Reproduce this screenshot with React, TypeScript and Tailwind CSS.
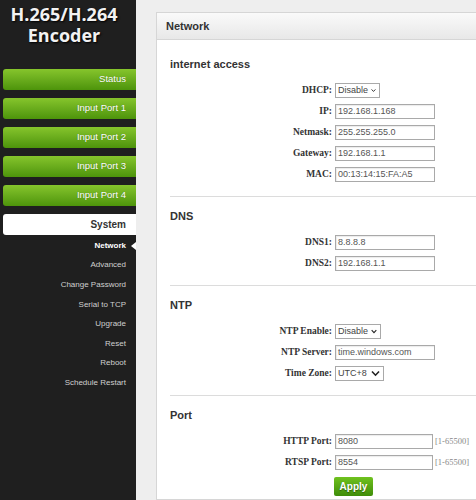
import React from "react";

const sans = { fontFamily: '"Liberation Sans", Arial, sans-serif' };

const navButtons = ["Status", "Input Port 1", "Input Port 2", "Input Port 3", "Input Port 4"];
const subItems = ["Advanced", "Change Password", "Serial to TCP", "Upgrade", "Reset", "Reboot", "Schedule Restart"];

const Chevron = () => (
  <svg width="9" height="7" viewBox="0 0 9 7" className="ml-[3px]">
    <path d="M1 1.5 L4.5 5.2 L8 1.5" fill="none" stroke="#222" strokeWidth="1.6" />
  </svg>
);

const Input = ({ value, w = "w-[100px]" }: { value: string; w?: string }) => (
  <div
    className={`${w} flex h-[15px] items-center border border-[#a9a9a9] bg-white pl-[2px] text-[9px] text-[#555] shadow-[inset_1px_1px_1px_rgba(0,0,0,0.08)]`}
  >
    {value}
  </div>
);

const Select = ({ value, w }: { value: string; w: string }) => (
  <div
    className={`${w} flex h-[15px] items-center justify-between border border-[#a9a9a9] bg-white pl-[2px] pr-[3px] text-[9px] text-[#444]`}
  >
    <span>{value}</span>
    <Chevron />
  </div>
);

const Row = ({ label, children }: { label: string; children: React.ReactNode }) => (
  <div className="flex h-[21px] items-center">
    <div
      className="w-[162px] text-right text-[9.5px] font-bold text-[#333]"
      style={{ fontFamily: '"Liberation Serif", "Times New Roman", serif' }}
    >
      {label}
    </div>
    <div className="ml-[3px] flex items-center">{children}</div>
  </div>
);

const Section = ({
  title,
  first,
  last,
  children,
}: {
  title: string;
  first?: boolean;
  last?: boolean;
  children: React.ReactNode;
}) => (
  <div className={`${first ? "pt-[16px]" : "pt-[11px]"} ${last ? "" : "border-b border-[#dcdcdc] pb-[11px]"}`}>
    <div className="h-[16px] text-[11px] font-bold leading-[16px] text-[#333]">{title}</div>
    <div className="mt-[8px]">{children}</div>
  </div>
);

const Hint = () => (
  <span
    className="ml-[2px] text-[8.5px] text-[#888]"
    style={{ fontFamily: '"Liberation Serif", "Times New Roman", serif' }}
  >
    [1-65500]
  </span>
);

export default function App() {
  return (
    <div className="flex h-[500px] w-[476px] overflow-hidden bg-white" style={sans}>
      <aside className="w-[136px] shrink-0 bg-[#1f1f1f]">
        <div
          className="h-[69px] pr-[8px] pt-[4px] text-center text-[18px] font-bold leading-[21px] text-[#f2f2f2] [text-shadow:1px_1px_2px_#000]"
          style={{ fontFamily: '"Open Sans", "DejaVu Sans", sans-serif' }}
        >
          <div>H.265/H.264</div>
          <div>Encoder</div>
        </div>
        <div className="flex flex-col gap-[8px] pl-[3px]">
          {navButtons.map((b) => (
            <div
              key={b}
              className="flex h-[21px] items-center justify-end rounded-l-[3px] bg-gradient-to-b from-[#86c52c] to-[#4d940a] pr-[10px] text-[9.5px] text-white [text-shadow:0_0_1px_rgba(0,0,0,0.3)]"
            >
              {b}
            </div>
          ))}
          <div className="flex h-[21px] items-center justify-end rounded-l-[3px] bg-white pr-[10px] text-[10px] font-bold text-[#333]">
            System
          </div>
        </div>
        <div className="mt-[1px] flex flex-col">
          <div className="relative flex h-[19.6px] items-center justify-end pr-[10px] text-[8px] font-bold text-white">
            Network
            <span className="absolute right-0 top-1/2 h-0 w-0 -translate-y-1/2 border-y-[4px] border-r-[5px] border-y-transparent border-r-white" />
          </div>
          {subItems.map((s) => (
            <div key={s} className="flex h-[19.6px] items-center justify-end pr-[10px] text-[8px] text-[#cfcfcf]">
              {s}
            </div>
          ))}
        </div>
      </aside>
      <main className="flex-1 bg-[#eeeeee] pl-[20px] pt-[12px]">
        <div className="h-full w-[340px] border border-r-0 border-[#d6d6d6] bg-white">
          <div className="flex h-[27px] items-center border-b border-[#d6d6d6] bg-gradient-to-b from-[#fafafa] to-[#e8e8e8] pl-[9px] text-[11px] font-bold text-[#333]">
            Network
          </div>
          <div className="pl-[13px]">
            <Section title="internet access" first>
              <Row label="DHCP:">
                <Select value="Disable" w="w-[45px]" />
              </Row>
              <Row label="IP:">
                <Input value="192.168.1.168" />
              </Row>
              <Row label="Netmask:">
                <Input value="255.255.255.0" />
              </Row>
              <Row label="Gateway:">
                <Input value="192.168.1.1" />
              </Row>
              <Row label="MAC:">
                <Input value="00:13:14:15:FA:A5" />
              </Row>
            </Section>
            <Section title="DNS">
              <Row label="DNS1:">
                <Input value="8.8.8.8" />
              </Row>
              <Row label="DNS2:">
                <Input value="192.168.1.1" />
              </Row>
            </Section>
            <Section title="NTP">
              <Row label="NTP Enable:">
                <Select value="Disable" w="w-[46px]" />
              </Row>
              <Row label="NTP Server:">
                <Input value="time.windows.com" />
              </Row>
              <Row label="Time Zone:">
                <Select value="UTC+8" w="w-[49px]" />
              </Row>
            </Section>
            <Section title="Port" last>
              <Row label="HTTP Port:">
                <Input value="8080" w="w-[98px]" />
                <Hint />
              </Row>
              <Row label="RTSP Port:">
                <Input value="8554" w="w-[98px]" />
                <Hint />
              </Row>
              <div className="ml-[164px] mt-[4px] flex h-[19px] w-[39px] items-center justify-center rounded-[2px] bg-gradient-to-b from-[#6fc21f] to-[#3f8d09] text-[10px] font-bold text-white [text-shadow:0_1px_1px_rgba(0,0,0,0.4)]">
                Apply
              </div>
            </Section>
          </div>
        </div>
      </main>
    </div>
  );
}
